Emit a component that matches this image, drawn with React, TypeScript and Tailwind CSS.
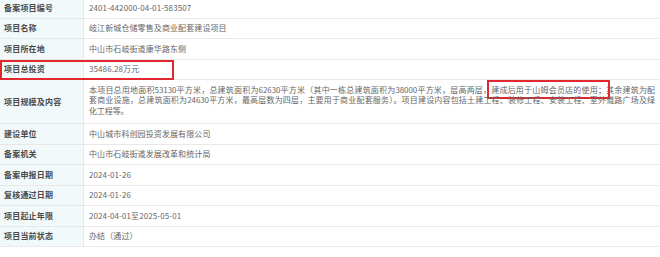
import React from "react";

const font = { fontFamily: '"Noto Sans CJK SC", "Noto Sans", sans-serif' };

function Row({
  label,
  children,
  tall,
  boxed,
}: {
  label: string;
  children: React.ReactNode;
  tall?: boolean;
  boxed?: boolean;
}) {
  return (
    <div className={`relative flex border-b border-[#e8e8e8] ${tall ? "h-[44px]" : "h-[20.5px]"}`}>
      <div className="w-[84px] shrink-0 bg-[#f2f9fb] border-r border-[#e8e8e8] flex items-center pl-[4px] text-[8px] tracking-[0.2px] font-bold text-[#4a4a4a] whitespace-nowrap">
        {label}
      </div>
      <div className="flex-1 flex items-center pl-[5px] text-[8px] tracking-[0.1px] text-[#666] whitespace-nowrap">
        {children}
      </div>
      {boxed && (
        <div className="absolute left-0 top-0 w-[174px] h-[20px] border-2 border-[#e0282e]" />
      )}
    </div>
  );
}

export default function App() {
  return (
    <div className="w-[660px] h-[257px] overflow-hidden bg-white" style={font}>
      <div className="-mt-[2px]">
        <Row label="备案项目编号">2401-442000-04-01-583507</Row>
        <Row label="项目名称">岐江新城仓储零售及商业配套建设项目</Row>
        <Row label="项目所在地">中山市石岐街道康华路东侧</Row>
        <Row label="项目总投资" boxed>
          35486.28万元
        </Row>
        <Row label="项目规模及内容" tall>
          <div className="flex flex-col w-[566px] leading-[10.5px] mt-[-2px] tracking-[-0.1px]">
            <div className="text-justify [text-align-last:justify]">
              本项目总用地面积53130平方米，总建筑面积为62630平方米（其中一栋总建筑面积为38000平方米，层高两层，
              <span className="outline-2 outline-[#e0282e] outline-offset-[2px] outline">
                建成后用于山姆会员店的使用；
              </span>
              其余建筑为配
            </div>
            <div className="text-justify [text-align-last:justify]">
              套商业设施，总建筑面积为24630平方米，最高层数为四层，主要用于商业配套服务）。项目建设内容包括土建工程、装修工程、安装工程、室外道路广场及绿
            </div>
            <div>化工程等。</div>
          </div>
        </Row>
        <Row label="建设单位">中山城市科创园投资发展有限公司</Row>
        <Row label="备案机关">中山市石岐街道发展改革和统计局</Row>
        <Row label="备案申报日期">2024-01-26</Row>
        <Row label="复核通过日期">2024-01-26</Row>
        <Row label="项目起止年限">2024-04-01至2025-05-01</Row>
        <Row label="项目当前状态">办结（通过）</Row>
      </div>
    </div>
  );
}
